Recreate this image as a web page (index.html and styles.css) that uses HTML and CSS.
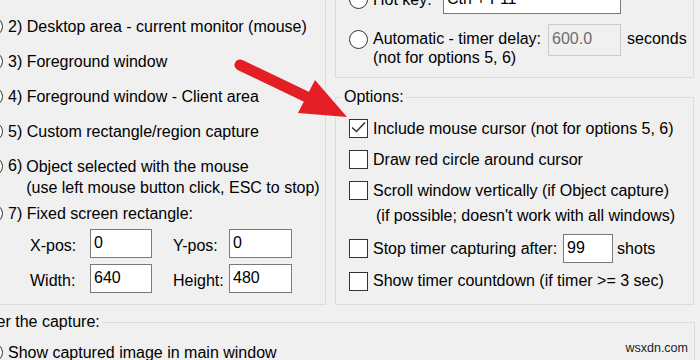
FILE: index.html
```html
<!DOCTYPE html>
<html lang="en">
<head>
<meta charset="utf-8">
<title>Capture setup</title>
<link rel="stylesheet" href="styles.css">
</head>
<body>
<div class="dialog">
  <div class="top">
    <fieldset class="group mode">
      <div class="row"><span class="radio"></span><span>1) Whole screen - all monitors</span></div>
      <div class="row"><span class="radio"></span><span>2) Desktop area - current monitor (mouse)</span></div>
      <div class="row"><span class="radio"></span><span>3) Foreground window</span></div>
      <div class="row"><span class="radio"></span><span>4) Foreground window - Client area</span></div>
      <div class="row"><span class="radio"></span><span>5) Custom rectangle/region capture</span></div>
      <div class="row multi"><span class="radio"></span><span class="num">6)</span><span class="lines">Object selected with the mouse<br>(use left mouse button click, ESC to stop)</span></div>
      <div class="row r7"><span class="radio"></span><span>7) Fixed screen rectangle:</span></div>
      <div class="coords">
        <span class="lbl">X-pos:</span><span class="field">0</span>
        <span class="lbl second">Y-pos:</span><span class="field">0</span>
        <span class="lbl">Width:</span><span class="field">640</span>
        <span class="lbl second">Height:</span><span class="field">480</span>
      </div>
    </fieldset>
    <div class="right">
      <fieldset class="group trigger">
        <div class="row hot"><span class="radio"></span><span class="hot-lbl">Hot key:</span><span class="field hot-field">Ctrl + F11</span></div>
        <div class="row auto">
          <span class="radio"></span>
          <span class="lines">Automatic - timer delay:<br>(not for options 5, 6)</span>
          <span class="field disabled">600.0</span>
          <span class="lines secs">seconds</span>
        </div>
      </fieldset>
      <fieldset class="group options">
        <legend>Options:</legend>
        <div class="row check-row"><span class="check on"><svg viewBox="0 0 17 17" width="17" height="17"><polyline points="2,7.5 6.5,11.5 15,2.5" fill="none" stroke="#333" stroke-width="1.6"/></svg></span><span>Include mouse cursor (not for options 5, 6)</span></div>
        <div class="row check-row"><span class="check"></span><span>Draw red circle around cursor</span></div>
        <div class="row check-row"><span class="check"></span><span>Scroll window vertically (if Object capture)</span></div>
        <div class="subline">(if possible; doesn't work with all windows)</div>
        <div class="row stop"><span class="check"></span><span>Stop timer capturing after:</span><span class="field shots-field">99</span><span class="shots">shots</span></div>
        <div class="row check-row last"><span class="check"></span><span>Show timer countdown (if timer &gt;= 3 sec)</span></div>
      </fieldset>
    </div>
  </div>
  <fieldset class="group after">
    <legend>After the capture:</legend>
    <div class="row"><span class="radio"></span><span>Show captured image in main window</span></div>
  </fieldset>
</div>
<div class="watermark">wsxdn.com</div>
<svg class="arrow" width="700" height="360" viewBox="0 0 700 360">
  <line x1="240" y1="65" x2="309" y2="98" stroke="#e31e24" stroke-width="11" stroke-linecap="round"/>
  <polygon points="315,80 347,117 298,113" fill="#e31e24"/>
</svg>
</body>
</html>
```
FILE: styles.css
```css
* { box-sizing: border-box; }
html, body { margin: 0; padding: 0; }
body {
  width: 700px;
  height: 360px;
  overflow: hidden;
  position: relative;
  background: #f0f0f0;
  color: #000;
  font-family: "Liberation Sans", Arial, sans-serif;
  font-size: 16px;
  line-height: 20px;
}
.dialog { margin: -30px 0 0 -30px; width: 725px; }
.top { display: grid; grid-template-columns: 356px 359px; column-gap: 9px; }
.group { border: 1px solid #dcdcdc; margin: 0; padding: 0; min-width: 0; }
.group legend { padding: 0 2px; margin-left: 6px; line-height: 20px; }

.row { display: flex; align-items: center; gap: 5px; height: 35px; white-space: nowrap; }
.radio {
  width: 19px; height: 19px; flex: none;
  border: 1px solid #333; border-radius: 50%; background: #fff;
}
.check {
  width: 19px; height: 19px; flex: none;
  border: 1px solid #333; background: #fff;
  display: flex; align-items: center; justify-content: center;
}
.check svg { display: block; }
.field {
  display: block; flex: none;
  height: 29px; border: 1px solid #7a7a7a; background: #fff;
  padding: 3px 0 0 3px; line-height: 20px;
}

/* left group */
.mode { padding: 3px 0 11px 13px; }
.mode .row.multi { height: auto; align-items: flex-start; padding-top: 7px; gap: 0; }
.mode .row.multi .radio { margin-top: 1px; margin-right: 5px; }
.mode .row.multi .num { margin-right: 4px; }
.mode .row.multi .lines { line-height: 21px; }
.mode .row.r7 { height: 31px; }
.coords {
  display: grid;
  grid-template-columns: 60px 62px 77px 63px;
  grid-template-rows: 29px 29px;
  row-gap: 6px;
  align-items: center;
  margin-left: 46px;
  white-space: nowrap;
}
.coords .lbl { padding-top: 4px; }
.coords .lbl.second { padding-left: 21px; }

/* right column */
.trigger { padding: 14px 0 10px 13px; }
.trigger .row.hot { height: 29px; }
.hot-lbl { width: 65px; }
.hot-field { width: 178px; }
.trigger .row.auto { height: auto; align-items: flex-start; margin-top: 10px; }
.trigger .row.auto .radio { margin-top: 6px; }
.trigger .lines { line-height: 19px; margin-top: 5px; }
.field.disabled {
  width: 73px; height: 32px; margin-left: 2px;
  border-color: #cccccc; background: #f0f0f0; color: #6d6d6d;
  padding-top: 4px;
}
.trigger .secs { margin-left: 1px; }

.options { margin-top: 9px; padding: 6px 0 7px 0; }
.options .row, .options .subline { margin-left: 13px; }
.subline { line-height: 20px; padding-left: 27px; }
.options .check-row { height: 31px; }
.options .row.stop { height: 29px; margin-top: 8px; }
.shots-field { width: 50px; margin-left: 1px; }
.shots { margin-left: -1px; }
.options .row.last { height: 32px; margin-top: 2px; }

.after { margin-top: 7px; padding: 3px 0 0 0; height: 60px; }
.after .row { margin-left: 13px; }
.after legend { margin-left: 4px; }

.watermark {
  position: absolute; right: 12px; bottom: 5px;
  font-size: 12.5px; line-height: 14px; color: #222;
  font-family: "Liberation Sans", Arial, sans-serif;
}
.arrow { position: absolute; left: 0; top: 0; pointer-events: none; }
```
